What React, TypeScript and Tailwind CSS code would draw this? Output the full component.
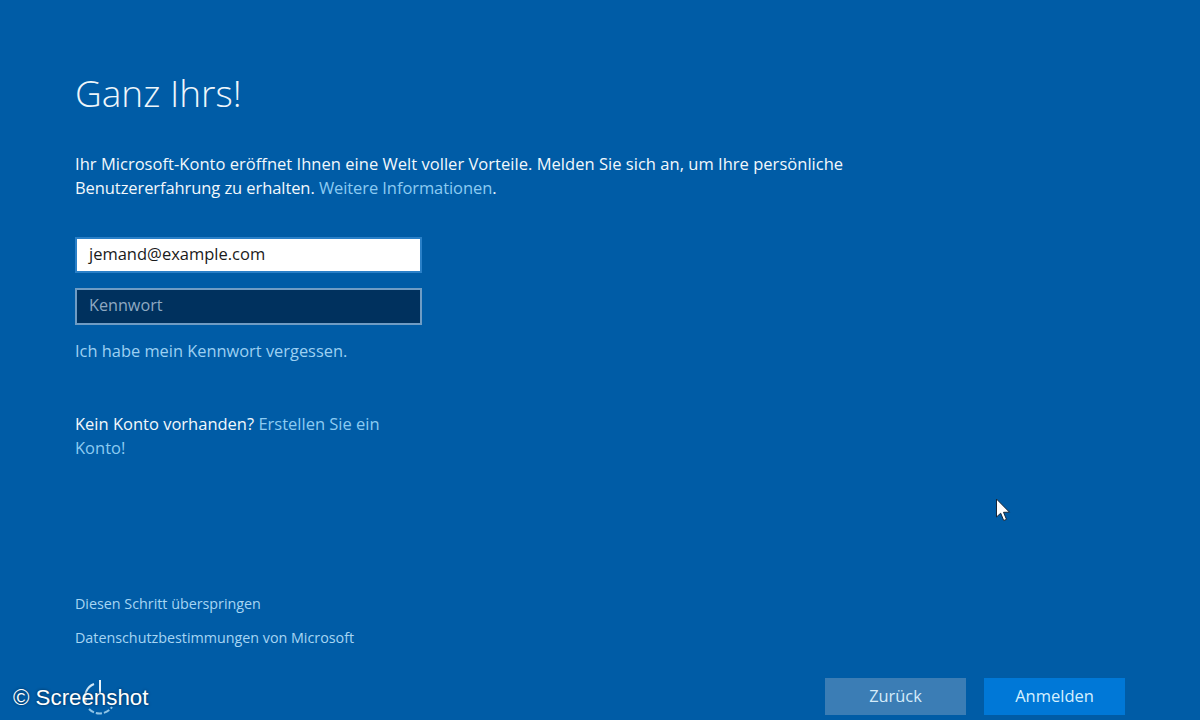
import React from "react"

const font = { fontFamily: '"Open Sans", "Noto Sans", sans-serif' }

const Cursor = () => (
  <svg width="16" height="25" viewBox="0 0 16 25" className="absolute left-[995px] top-[498px]">
    <path d="M1.5 1 L1.5 19 L5.7 15.2 L8.7 22.5 L11.5 21.4 L8.5 14.3 L14.5 14.2 Z" fill="#fff" stroke="#16263a" strokeWidth="1" />
  </svg>
)

const Spinner = () => (
  <svg width="40" height="40" viewBox="0 0 40 40" className="absolute left-[79px] top-[677px]">
    <path d="M7 25 A14 14 0 0 1 15 7" fill="none" stroke="#cfe6f5" strokeWidth="2" />
    <path d="M21 3 V16" fill="none" stroke="#e8f3fa" strokeWidth="2" />
    <path d="M10 32 A15 15 0 0 0 33 30" fill="none" stroke="#8fc4e6" strokeWidth="2" strokeDasharray="6 2" />
  </svg>
)

export default function App() {
  return (
    <div className="relative w-[1200px] h-[720px] overflow-hidden bg-[#005ca6] text-white flex flex-col" style={font}>
      <div className="pl-[75px] pt-[67px] flex-1">
        <h1 className="text-[37px] leading-[52px] font-light text-[#eef6fb]">Ganz Ihrs!</h1>

        <p className="mt-[33px] w-[800px] text-[16.5px] leading-[24px] text-[#f2f8fc]">
          <span className="tracking-[0.03px]">
            Ihr Microsoft-Konto eröffnet Ihnen eine Welt voller Vorteile. Melden Sie sich an, um Ihre persönliche
          </span>
          <br />
          <span className="tracking-[-0.08px]">
            Benutzererfahrung zu erhalten. <span className="text-[#8ccbf2]">Weitere Informationen</span>.
          </span>
        </p>

        <div className="mt-[37px] w-[347px] h-[36px] bg-white border-2 border-[#2a80c8] flex items-center pl-[12px] pb-[2px] text-[16.5px] text-[#1a1a1a]">
          jemand@example.com
        </div>
        <div className="mt-[15px] w-[347px] h-[37px] bg-[#00315e] border-2 border-[#6f9cc4] flex items-center pl-[12px] pb-[2px] text-[16.2px] text-[#8fa9c2]">
          Kennwort
        </div>

        <p className="mt-[14px] text-[16.4px] leading-[24px] text-[#9cd0f2]">Ich habe mein Kennwort vergessen.</p>

        <p className="mt-[49px] w-[330px] text-[16.5px] leading-[24px] text-[#f2f8fc]">
          Kein Konto vorhanden? <span className="text-[#8ccbf2]">Erstellen Sie ein Konto!</span>
        </p>

        <p className="mt-[132px] text-[14.3px] leading-[24px] text-[#a6d5f3]">Diesen Schritt überspringen</p>
        <p className="mt-[10px] text-[14.3px] leading-[24px] text-[#a6d5f3]">Datenschutzbestimmungen von Microsoft</p>
      </div>

      <div className="flex justify-end gap-[18px] pr-[75px] pb-[5px]">
        <button className="w-[141px] h-[37px] bg-[#3b7db5] text-[16.4px] text-[#d5ecfa]">Zurück</button>
        <button className="w-[141px] h-[37px] bg-[#0078d7] text-[16.5px] text-[#d5f0ff]">Anmelden</button>
      </div>

      <Spinner />
      <Cursor />
      <div
        className="absolute left-[13px] top-[684px] text-[22.3px] leading-[28px] text-white [text-shadow:0_0_3px_#00294d]"
        style={{ fontFamily: '"Liberation Sans", Arial, sans-serif' }}
      >
        © Screenshot
      </div>
    </div>
  )
}
